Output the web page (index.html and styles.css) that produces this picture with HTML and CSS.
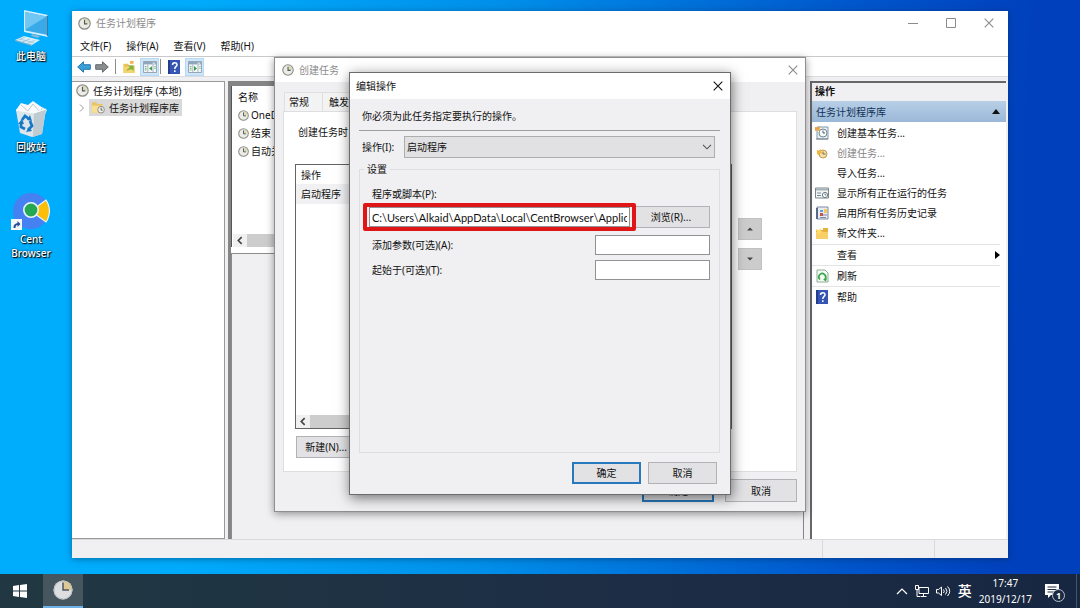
FILE: index.html
```html
<!DOCTYPE html>
<html lang="zh-CN">
<head>
<meta charset="utf-8">
<title>任务计划程序</title>
<link rel="stylesheet" href="styles.css">
</head>
<body>
<svg class="defs" aria-hidden="true">
  <symbol id="clock" viewBox="0 0 16 16">
    <circle cx="8" cy="8" r="7" fill="#ecece4" stroke="#8b8b87" stroke-width="1.5"/>
    <path d="M8 2.200A5.800 5.800 0 0 1 13.800 8H8z" fill="#d9dcb4"/>
    <path d="M8 3.500V8.500H11.500" fill="none" stroke="#4e5a66" stroke-width="1.400"/>
  </symbol>
  <symbol id="help" viewBox="0 0 12 14">
    <path d="M0 0h12v14H0z" fill="#3555b5"/><path d="M0 0h2v14H0z" fill="#233c8c"/>
    <path d="M4.500 5C4.500 2 9 2 9 4.700C9 6.500 6.800 6.400 6.800 9M6.800 10.300V12" fill="none" stroke="#fff" stroke-width="1.500"/>
  </symbol>
  <symbol id="panel" viewBox="0 0 16 14">
    <path d="M.5.500h15v13H.500z" fill="#f7fafc" stroke="#8795a3"/><path d="M1 1h14v3H1z" fill="#8ea6bd"/>
    <path d="M11 2.500h3" stroke="#fff"/><path d="M5.500 4v9M11.500 4v9" stroke="#9aa7b2"/>
    <path d="M2 6.500h2M2 8.500h2M2 10.500h2M13 6.500h1.500M13 8.500h1.500" stroke="#59a56b"/>
  </symbol>
  <symbol id="arrow-left" viewBox="0 0 4 6"><path d="M4 0v6L0 3z" fill="#3f9a4c"/></symbol>
  <symbol id="cross" viewBox="0 0 10 10"><path d="M.7.700l8.600 8.600M9.300.700L.7 9.300" fill="none" stroke="currentColor" stroke-width="1.100"/></symbol>
  <symbol id="back" viewBox="0 0 8 8"><path d="M5.500 1L2.500 4l3 3" fill="none" stroke="#444" stroke-width="1.500"/></symbol>
</svg>

<main class="desktop">
  <nav class="shortcuts">
    <a class="shortcut" href="#">
      <svg viewBox="0 0 38 38" width="38" height="38"><path d="M12 1l24 5v22l-24-5z" fill="#d3effc"/><path d="M13.500 3l21 4.400v18.400l-21-4.400z" fill="#3aa9e8"/><path d="M13.500 3l21 4.400-21 13z" fill="#70c7f4"/><path d="M34.500 7.400l1.500-1.400v22l-1.500-2.200z" fill="#277cad"/><path d="M20 25l8 2-2 2-7-2z" fill="#87b9d3"/><path d="M12 27l16 4-8 5-17-5z" fill="#d4edf8"/><path d="M3 31l17 5v1L3 32z" fill="#86afc4"/><path d="M8 30l14 4M13 28l-7 3M18 30l-8 3M23 31l-8 4" stroke="#96bfd2" stroke-width=".7"/></svg>
      <span>此电脑</span>
    </a>
    <a class="shortcut" href="#">
      <svg viewBox="0 0 38 38" width="38" height="38"><path d="M4 10l5-7 7 2 5-4 7 5 7 4-3 6H7z" fill="#f7f9fa"/><path d="M9 5l7 6 5-7 7 8 3-5" fill="none" stroke="#bec9cf"/><path d="M4 10l18 3 12-4-4 25-10 3-12-4z" fill="#dce5ea"/><path d="M22 13l12-4-4 25-9 3z" fill="#bfcbd2"/><path d="M4 10l18 3 12-4" fill="none" stroke="#fff"/><path d="M10 20l3-4 4 3M18 21l2 5-4 4M13 29l-4-2v-4" fill="none" stroke="#1779c6" stroke-width="2.800"/><path d="M18 15l2 6-5-1zM20 31l-6 1 3-5zM6 24l4-5 2 5z" fill="#1779c6"/></svg>
      <span>回收站</span>
    </a>
    <a class="shortcut" href="#">
      <svg viewBox="0 0 40 40" width="40" height="40"><circle cx="20" cy="20" r="18" fill="#4681f2"/><path d="M20 20L35 9q3 4 3.500 11Q38 27 35 31z" fill="#fbbe09" stroke="#e8f4ff" stroke-width="1.200"/><circle cx="20" cy="19" r="7.200" fill="#25a852" stroke="#e8f4ff" stroke-width="1.600"/><path d="M0 28h11v11H0z" fill="#f5f8fa"/><path d="M2.500 37q-.5-4 4-5v-2l3 3-3 3v-2q-2 0-2 3z" fill="#234f93"/></svg>
      <span>Cent<br>Browser</span>
    </a>
  </nav>

  <section class="window main-window">
    <header class="title-bar inactive">
      <svg class="icon-clock"><use href="#clock"/></svg>
      <h1>任务计划程序</h1>
      <div class="caption-buttons">
        <button aria-label="最小化"><svg viewBox="0 0 10 10"><path d="M0 5.500h10" stroke="currentColor"/></svg></button>
        <button aria-label="最大化"><svg viewBox="0 0 10 10"><path d="M.5.500h9v9h-9z" fill="none" stroke="currentColor"/></svg></button>
        <button aria-label="关闭"><svg><use href="#cross"/></svg></button>
      </div>
    </header>
    <nav class="menu-bar"><button>文件(F)</button><button>操作(A)</button><button>查看(V)</button><button>帮助(H)</button></nav>
    <div class="tool-bar">
      <button aria-label="后退"><svg viewBox="0 0 14 12"><path d="M.7 6L6.500.8V3.700H13.300V8.300H6.500V11.200z" fill="#3c9fd9" stroke="#2478ae"/></svg></button>
      <button aria-label="前进"><svg viewBox="0 0 14 12"><path d="M13.300 6L7.500.8V3.700H.7V8.300H7.500V11.200z" fill="#8a8e91" stroke="#66696c"/></svg></button>
      <i class="tool-rule"></i>
      <button aria-label="上一级"><svg viewBox="0 0 14 13"><path d="M1 3h5l1 2h6v8H1z" fill="#e8c15a"/><path d="M1 6h12v7H1z" fill="#f5d470"/><path d="M4 11q1-3 4-4l-2-2h6v6l-2-2q-3 0-6 2z" fill="#7fb33b"/><path d="M8 0h4v3H8z" fill="#efb451"/></svg></button>
      <button class="on" aria-label="显示控制台树"><svg><use href="#panel"/><use href="#arrow-left" x="6" y="5" width="3" height="5"/></svg></button>
      <i class="tool-rule tight"></i>
      <button aria-label="帮助"><svg class="tall"><use href="#help"/></svg></button>
      <button class="on" aria-label="显示操作窗格"><svg><use href="#panel"/><path d="M6 5l3 2.500L6 10z" fill="#3f9a4c"/></svg></button>
    </div>
    <div class="panes">
      <aside class="tree">
        <div class="tree-row"><svg class="icon-clock"><use href="#clock"/></svg><span>任务计划程序 (本地)</span></div>
        <div class="tree-row child">
          <svg class="chevron" viewBox="0 0 6 8"><path d="M1 .5L4.500 4 1 7.500" fill="none" stroke="#999"/></svg>
          <div class="selected"><svg viewBox="0 0 16 14" class="folder"><path d="M1 1h5l1 2h6v10H1z" fill="#e9c568"/><path d="M1 5h12v8H1z" fill="#f8df92"/><circle cx="11.500" cy="9.500" r="3.800" fill="#eef0e9" stroke="#85857e"/><path d="M11.500 7v3h2" fill="none" stroke="#555"/></svg><span>任务计划程序库</span></div>
        </div>
      </aside>
      <section class="center">
        <div class="task-list">
          <div class="list-head">名称</div>
          <div class="list-row"><svg class="icon-clock"><use href="#clock"/></svg>OneDrive</div>
          <div class="list-row"><svg class="icon-clock"><use href="#clock"/></svg>结束</div>
          <div class="list-row"><svg class="icon-clock"><use href="#clock"/></svg>自动关机</div>
          <div class="scroll"><svg><use href="#back"/></svg><i></i></div>
        </div>
        <div class="details"></div>
      </section>
      <aside class="actions">
        <h2>操作</h2>
        <button class="action-head"><span>任务计划程序库</span><svg viewBox="0 0 8 5"><path d="M0 5l4-5 4 5z" fill="#111"/></svg></button>
        <div class="action-group">
          <button><svg viewBox="0 0 14 14"><path d="M2 1h11v12H2z" fill="#e7edf0" stroke="#8199a8"/><path d="M1 13h12" stroke="#7c8790"/><circle cx="8" cy="7" r="4" fill="#f8faf8" stroke="#748894"/><path d="M8 4.500V7h2" fill="none" stroke="#466479"/><path d="M0 1l3 .5L5 0l-.5 3L5 6 2.500 4 0 5z" fill="#f0a13b"/></svg><span>创建基本任务...</span></button>
          <button disabled><svg viewBox="0 0 14 14"><circle cx="8" cy="8" r="4" fill="#efe0ae" stroke="#c29b50"/><path d="M8 5.500V8h2.500" fill="none" stroke="#7d6a48"/><path d="M2 4l2 .5L6 3l0 3 2 1-4 1-1 2-1-3z" fill="#f1b53b"/></svg><span>创建任务...</span></button>
          <button><svg viewBox="0 0 14 14"></svg><span>导入任务...</span></button>
          <button><svg viewBox="0 0 14 14"><path d="M.5 2h13v10H.500z" fill="#f4f6f6" stroke="#79868d"/><path d="M1 3.500h12" stroke="#a6b3ba" stroke-width="2"/><path d="M2 7h4M2 9.500h4" stroke="#708895"/><circle cx="10" cy="9" r="2.600" fill="#fff" stroke="#6a7b83"/><path d="M10 7.500V9h1.300" fill="none" stroke="#5a6870" stroke-width=".8"/></svg><span>显示所有正在运行的任务</span></button>
          <button><svg viewBox="0 0 14 14"><path d="M2 1h11v12H2z" fill="#e8ebef" stroke="#7c8ba3"/><path d="M2 2v11" stroke="#57698b" stroke-width="2"/><path d="M5 4h3v2H5z" fill="#63a0d0"/><path d="M9 3h3v4H9z" fill="#f4c85a"/><path d="M5 7h3v3H5z" fill="#c75648"/><path d="M8 9h4M5 11.500h6" stroke="#788da7"/></svg><span>启用所有任务历史记录</span></button>
          <button><svg viewBox="0 0 14 14"><path d="M1 4h7V2h5v11H1z" fill="#e7b13f"/><path d="M1 6h12v7H1z" fill="#f7cf66"/><path d="M1 3l3 1 2-2 0 3 2 1-3 1-2 2-1-3z" fill="#ffdb6c"/></svg><span>新文件夹...</span></button>
        </div>
        <div class="action-single"><button><svg viewBox="0 0 14 14"></svg><span>查看</span><svg class="more" viewBox="0 0 5 8"><path d="M0 0l5 4-5 4z" fill="#000"/></svg></button></div>
        <div class="action-single"><button><svg viewBox="0 0 14 14"><path d="M2 1h8l3 3v9H2z" fill="#f4fbf4" stroke="#93aa96"/><path d="M5 10.500A3.400 3.400 0 1 1 10 10" fill="none" stroke="#34a54a" stroke-width="1.600"/><path d="M12 9l-1 3.500L8 10.500z" fill="#34a54a"/></svg><span>刷新</span></button></div>
        <div class="action-single"><button><svg><use href="#help"/></svg><span>帮助</span></button></div>
      </aside>
    </div>
    <footer class="status"><i></i><i></i></footer>
  </section>

  <section class="window task-window">
    <header class="title-bar inactive">
      <svg class="icon-clock"><use href="#clock"/></svg><h1>创建任务</h1>
      <div class="caption-buttons"><button aria-label="关闭"><svg><use href="#cross"/></svg></button></div>
    </header>
    <div class="task-body">
      <nav class="tabs"><button>常规</button><button>触发器</button></nav>
      <div class="tab-page">
        <p>创建任务时，必须指定任务启动时将发生的操作。</p>
        <div class="action-list">
          <div class="op-table"><div class="op-head">操作</div><div class="op-row">启动程序</div><div class="scroll"><svg><use href="#back"/></svg><i></i></div></div>
          <div class="order">
            <button aria-label="上移"><svg viewBox="0 0 6 4"><path d="M0 3.500l3-3 3 3z" fill="#444"/></svg></button>
            <button aria-label="下移"><svg viewBox="0 0 6 4"><path d="M0 .5l3 3 3-3z" fill="#444"/></svg></button>
          </div>
        </div>
        <button class="push new">新建(N)...</button>
      </div>
      <div class="buttons"><button class="push primary">确定</button><button class="push">取消</button></div>
    </div>
  </section>

  <section class="window edit-window">
    <header class="title-bar"><h1>编辑操作</h1>
      <div class="caption-buttons"><button aria-label="关闭"><svg><use href="#cross"/></svg></button></div>
    </header>
    <form class="edit-body">
      <p class="lead">你必须为此任务指定要执行的操作。</p>
      <div class="select-row"><label for="kind">操作(I):</label>
        <div class="select-box"><select id="kind"><option>启动程序</option></select><svg viewBox="0 0 10 6"><path d="M1 .8l4 4 4-4" fill="none" stroke="#555" stroke-width="1.100"/></svg></div>
      </div>
      <fieldset class="settings"><legend>设置</legend>
        <label class="program-label" for="program">程序或脚本(P):</label>
        <div class="program-row"><div class="highlight"><input id="program" type="text" value="C:\Users\Alkaid\AppData\Local\CentBrowser\Applic"></div><button type="button" class="push browse">浏览(R)...</button></div>
        <div class="field-row"><label for="args">添加参数(可选)(A):</label><input id="args" type="text"></div>
        <div class="field-row"><label for="start">起始于(可选)(T):</label><input id="start" type="text"></div>
      </fieldset>
      <div class="buttons"><button type="button" class="push primary">确定</button><button type="button" class="push">取消</button></div>
    </form>
  </section>
</main>

<footer class="taskbar">
  <button class="start" aria-label="开始"><svg viewBox="0 0 14 14" width="14" height="14"><path d="M0 2l6-.9v5.500H0zM7 1l7-1v6.600H7zM0 7.500h6v5.400L0 12zM7 7.500h7V14l-7-1z" fill="#fff"/></svg></button>
  <button class="running" aria-label="任务计划程序"><svg viewBox="0 0 20 20" width="20" height="20"><circle cx="10" cy="10" r="9.500" fill="#dcdee0"/><path d="M10 .5A9.500 9.500 0 0 1 19.500 10H10z" fill="#dfc894"/><path d="M10 2.500V10H16" fill="none" stroke="#4b5563" stroke-width="1.500"/><circle cx="10" cy="10" r="9" fill="none" stroke="#bcc1c4"/></svg></button>
  <div class="tray">
    <svg viewBox="0 0 12 8" width="12" height="8"><path d="M1 7l5-5 5 5" fill="none" stroke="#fff" stroke-width="1.200"/></svg>
    <svg viewBox="0 0 14 12" width="14" height="12"><path d="M4 2.500h9.500v6H4zM5.500 11.500h6M8.500 9v2.500M.5.500h3v4h-3zM2 4.500v7h3" fill="none" stroke="#fff"/></svg>
    <svg viewBox="0 0 15 12" width="15" height="12"><path d="M.5 4.500h2L5.500 2v8.500L2.500 8h-2zM7.500 4.500q1.500 1.700 0 3.500M9.500 3q3 3.200 0 6.500M11.500 1.500q4.500 4.700 0 9.500" fill="none" stroke="#fff"/></svg>
    <span class="ime">英</span>
    <time datetime="2019-12-17T17:47">17:47<br>2019/12/17</time>
    <div class="notify"><svg viewBox="0 0 15 15" width="15" height="15"><path d="M0 0h14v11H6l-3 3v-3H0z" fill="#fff"/><path d="M2.500 3h9M2.500 5.500h9M2.500 8h6" stroke="#1c2c44"/></svg><b>1</b></div>
  </div>
</footer>
</body>
</html>
```
FILE: styles.css
```css
* { box-sizing: border-box; }
body {
  margin: 0; min-height: 100vh; display: flex; flex-direction: column; overflow: hidden;
  font: 10px/14px "Noto Sans", "Noto Sans CJK SC", sans-serif; color: #111;
}
button, input, select { font: inherit; color: inherit; }
button { padding: 0; border: 0; background: none; }
h1, h2, p { margin: 0; font: inherit; }
svg { display: block; flex: none; }
.defs { display: none; }

.desktop {
  position: relative; flex: 1;
  background: linear-gradient(92deg, #00adfd 0%, #00abfb 18%, #0090ea 45%, #0056cb 78%, #0040bc 94%);
}
.shortcuts { display: flex; flex-direction: column; gap: 37px; width: 62px; padding-top: 9px; }
.shortcut {
  display: flex; flex-direction: column; align-items: center; gap: 2px;
  color: #fff; font-weight: 500; text-align: center; text-decoration: none; text-shadow: 1px 1px 1px #000, 0 0 2px #023;
}
.shortcut:last-child { gap: 1px; }

.window { position: absolute; display: flex; flex-direction: column; background: #f0eff1; }
.main-window { left: 72px; right: 72px; top: 11px; bottom: 16px; box-shadow: 0 1px 6px #00285080; }
.title-bar { display: flex; align-items: center; gap: 5px; min-height: 24px; padding-left: 6px; background: #fff; }
.title-bar.inactive { color: #8b8b8b; }
.icon-clock { width: 13px; height: 13px; }
.caption-buttons { display: flex; margin-left: auto; }
.caption-buttons button { display: flex; justify-content: center; width: 38px; }
.caption-buttons svg { width: 10px; height: 10px; }
.menu-bar { display: flex; gap: 15px; padding: 4px 8px 3px; background: #fff; border-bottom: 1px solid #c9c9cb; }
.tool-bar { display: flex; align-items: center; gap: 4px; height: 20px; padding-left: 5px; background: #fff; border-bottom: 1px solid #dcdcde; }
.tool-bar button { display: flex; align-items: center; justify-content: center; height: 18px; }
.tool-bar svg { width: 14px; height: 12px; }
.tool-bar .tall { height: 14px; }
.tool-bar .on { width: 19px; background: #cde6f9; border: 1px solid #b4daf5; }
.tool-rule { width: 1px; height: 15px; margin: 0 2px; background: #8d8d8d; }
.tool-rule.tight { margin-left: -3px; }

.panes { flex: 1; display: grid; grid-template-columns: 153px minmax(0, 1fr) 198px; gap: 4px; padding-top: 4px; }
.tree { background: #fff; border: solid #999; border-width: 1px 1px 1px 0; }
.tree-row { display: flex; align-items: center; gap: 4px; height: 17px; padding-left: 4px; }
.tree-row.child { padding-left: 7px; }
.chevron { width: 6px; height: 8px; }
.selected { display: flex; align-items: center; gap: 4px; height: 17px; padding: 0 3px 0 2px; background: #d9d9d9; }
.folder { width: 14px; height: 13px; }
.center { display: flex; flex-direction: column; margin: 0 2px 0 -1px; border: solid #858585; border-width: 5px 1px 0 3px; }
.task-list { display: flex; flex-direction: column; height: 161px; border-left: 1px solid #555; background: #fff; padding-left: 1px; }
.list-head { padding: 4px 5px 2px; }
.list-row { display: flex; align-items: center; gap: 2px; height: 18px; padding-left: 5px; }
.task-list .icon-clock { width: 11px; height: 11px; }
.scroll { display: flex; align-items: center; height: 13px; margin-top: auto; background: #f0f0f0; }
.scroll svg { width: 14px; height: 9px; }
.scroll i { flex: 1; align-self: stretch; background: #cdcdcd; }
.details { flex: 1; border-top: 6px solid #fff; box-shadow: inset 1px 1px #8b8b8b; }
.actions { background: #fff; border: solid #676767; border-width: 2px 0 0 2px; margin-right: 2px; }
.actions h2 { padding: 1px 3px 3px; font-weight: bold; background: #f0eff1; }
.action-head { display: flex; align-items: center; justify-content: space-between; width: 100%; height: 21px; padding: 0 6px 0 4px; background: linear-gradient(#b8cfe7, #9ab8d7); color: #123257; }
.action-head svg { width: 8px; height: 5px; }
.action-group { padding: 1px 0; }
.action-group button, .action-single button { display: flex; align-items: center; gap: 8px; width: 100%; height: 20px; padding-left: 3px; }
.action-group svg, .action-single svg { width: 14px; height: 14px; }
.action-group button:disabled { color: #858585; }
.action-single { margin-right: 6px; border-top: 1px solid #e4e4e6; }
.action-single .more { width: 5px; height: 8px; margin-left: auto; }
.status { display: flex; justify-content: flex-end; height: 19px; border-top: 1px solid #d9d9d9; }
.status i { width: 112px; border-left: 1px solid #d9d9d9; }
.status i + i { width: 74px; }

.task-window { left: 274px; top: 57px; width: 532px; border: 1px solid #8e8e8e; box-shadow: 0 2px 8px #0006; }
.task-window .caption-buttons button { width: 24px; }
.task-window .title-bar { padding-left: 7px; }
.task-window .icon-clock { width: 12px; height: 12px; }
.task-body { padding: 10px 8px 9px; }
.tabs { display: flex; padding-left: 1px; }
.tabs button { height: 19px; padding: 0 13px 0 4px; border: solid #dfdfdf; border-width: 1px 1px 0; background: #f3f3f3; }
.tabs button + button { padding-left: 6px; border-left: 0; }
.tab-page { padding: 13px 11px; background: #fff; border: 1px solid #dedee0; }
.tab-page p { padding-left: 3px; }
.action-list { display: grid; grid-template-columns: minmax(0, 1fr) 24px; gap: 6px; margin: 25px 23px 7px 0; }
.op-table { display: flex; flex-direction: column; height: 265px; border: 1px solid #646464; }
.op-head { padding: 3px 5px 2px; }
.op-row { padding: 3px 5px; background: #f1f1f3; }
.order { display: flex; flex-direction: column; gap: 8px; padding-top: 54px; }
.order button { display: flex; align-items: center; justify-content: center; height: 22px; background: #ccc; border: 1px solid #c1c1c1; }
.order svg { width: 6px; height: 4px; }
.push { width: 69px; height: 22px; background: #e2e1e3; border: 1px solid #b3b1b5; text-align: center; }
.push.primary { border: 2px solid #2778bd; }
.push.new { display: block; width: 60px; margin: 0 0 0 1px; }
.buttons { display: flex; justify-content: flex-end; gap: 7px; }
.task-body .buttons { gap: 11px; padding-top: 7px; }
.task-body .buttons .push { width: 72px; height: 23px; }

.edit-window { left: 349px; top: 72px; width: 382px; border: 1px solid #6c6c6c; box-shadow: 1px 3px 12px #0008; }
.edit-window .title-bar { min-height: 26px; }
.edit-window .caption-buttons button { width: 25px; }
.edit-body { padding: 10px 10px 10px 9px; }
.lead { padding: 0 3px 7px; border-bottom: 1px solid #9d9d9f; }
.select-row { display: flex; align-items: center; gap: 10px; padding: 5px 5px 4px 3px; }
.select-box { flex: 1; display: grid; align-items: center; }
.select-box > * { grid-area: 1 / 1; }
.select-box select { appearance: none; width: 100%; height: 22px; padding: 0 2px; border: 1px solid #adadaf; border-radius: 0; background: #e1e0e2; }
.select-box svg { width: 10px; height: 6px; justify-self: end; margin-right: 3px; pointer-events: none; }
.settings { min-width: 0; min-height: 291px; margin: 0 0 9px; padding: 11px 9px 0 3px; border: 1px solid #dedde0; }
.settings legend { margin-left: 1px; padding: 0 3px; }
.program-label, .field-row label { padding-left: 9px; }
.program-row { display: flex; align-items: center; margin: 2px 0 4px; }
.highlight { position: relative; z-index: 1; flex: 1; padding: 0 2px; border: 4px solid #df1518; border-radius: 2px; background: #f4eeee; }
.settings input { height: 20px; padding: 0 2px; border: 1px solid #929294; border-radius: 0; background: #fff; }
.highlight input { display: block; width: 100%; font-family: Lato, "Noto Sans CJK SC", sans-serif; font-size: 11px; }
.browse { width: 78px; margin-left: -4px; }
.field-row { display: flex; align-items: center; justify-content: space-between; margin-bottom: 5px; }
.field-row input { width: 115px; }
.edit-body .buttons { padding-right: 3px; }

.taskbar { display: flex; height: 34px; background: linear-gradient(90deg, #213842, #1c2d45 60%, #182741); color: #fff; }
.start { display: grid; place-items: center; width: 43px; padding-right: 3px; }
.running { display: grid; place-items: center; width: 40px; background: #46565f; border-bottom: 2px solid #6db1e6; }
.tray { display: flex; align-items: center; gap: 7px; margin: 0 3px 0 auto; padding-right: 16px; border-right: 1px solid #46536a; }
.ime { font-size: 14px; line-height: 20px; font-weight: 500; }
.tray time { line-height: 16px; text-align: center; }
.notify { position: relative; margin-left: 6px; }
.notify b { position: absolute; left: 7px; top: 5px; width: 13px; height: 13px; border: 1px solid #b9c0cb; border-radius: 50%; background: #1b2a40; font-size: 9px; line-height: 11px; text-align: center; }
```
